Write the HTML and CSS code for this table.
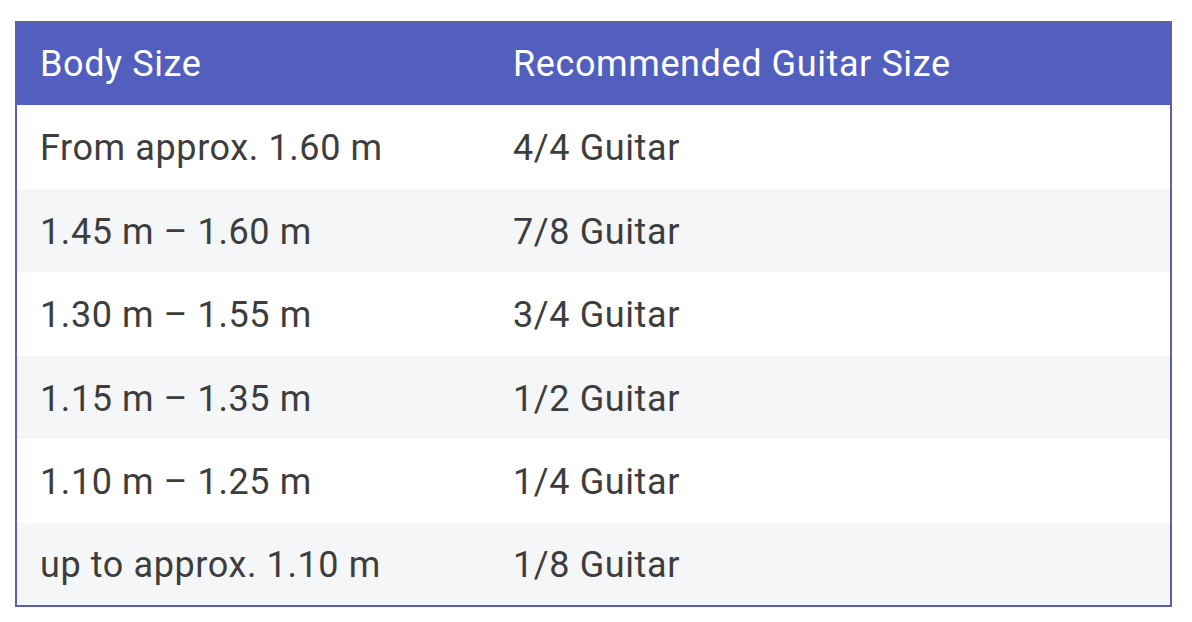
FILE: index.html
```html
<!DOCTYPE html>
<html>
<head>
<meta charset="utf-8">
<link rel="stylesheet" href="styles.css">
</head>
<body>
<div class="wrap">
<table class="sizes">
<thead>
<tr><th class="c1">Body Size</th><th>Recommended Guitar Size</th></tr>
</thead>
<tbody>
<tr><td class="c1">From approx. 1.60 m</td><td>4/4 Guitar</td></tr>
<tr><td class="c1">1.45 m – 1.60 m</td><td>7/8 Guitar</td></tr>
<tr><td class="c1">1.30 m – 1.55 m</td><td>3/4 Guitar</td></tr>
<tr><td class="c1">1.15 m – 1.35 m</td><td>1/2 Guitar</td></tr>
<tr><td class="c1">1.10 m – 1.25 m</td><td>1/4 Guitar</td></tr>
<tr><td class="c1">up to approx. 1.10 m</td><td>1/8 Guitar</td></tr>
</tbody>
</table>
</div>
</body>
</html>
```
FILE: styles.css
```css
html, body {
  margin: 0;
  padding: 0;
  background: #ffffff;
}
.wrap {
  padding: 21px 0 0 15px;
}
.sizes {
  width: 1157px;
  border-collapse: collapse;
  border: 2px solid #5a5fae;
  font-family: Roboto, "Liberation Sans", sans-serif;
  font-size: 36px;
  letter-spacing: 0.6px;
  color: #3d3d3d;
}
.sizes th {
  background: #525fbf;
  color: #ffffff;
  font-weight: 400;
  text-align: left;
  height: 83px;
  padding: 0 23px;
  box-sizing: border-box;
}
.sizes td {
  height: 83.5px;
  padding: 3px 23px 0;
  box-sizing: border-box;
}
.sizes .c1 {
  width: 474px;
}
.sizes tbody tr:nth-child(even) td {
  background: #f5f6f8;
}
```
